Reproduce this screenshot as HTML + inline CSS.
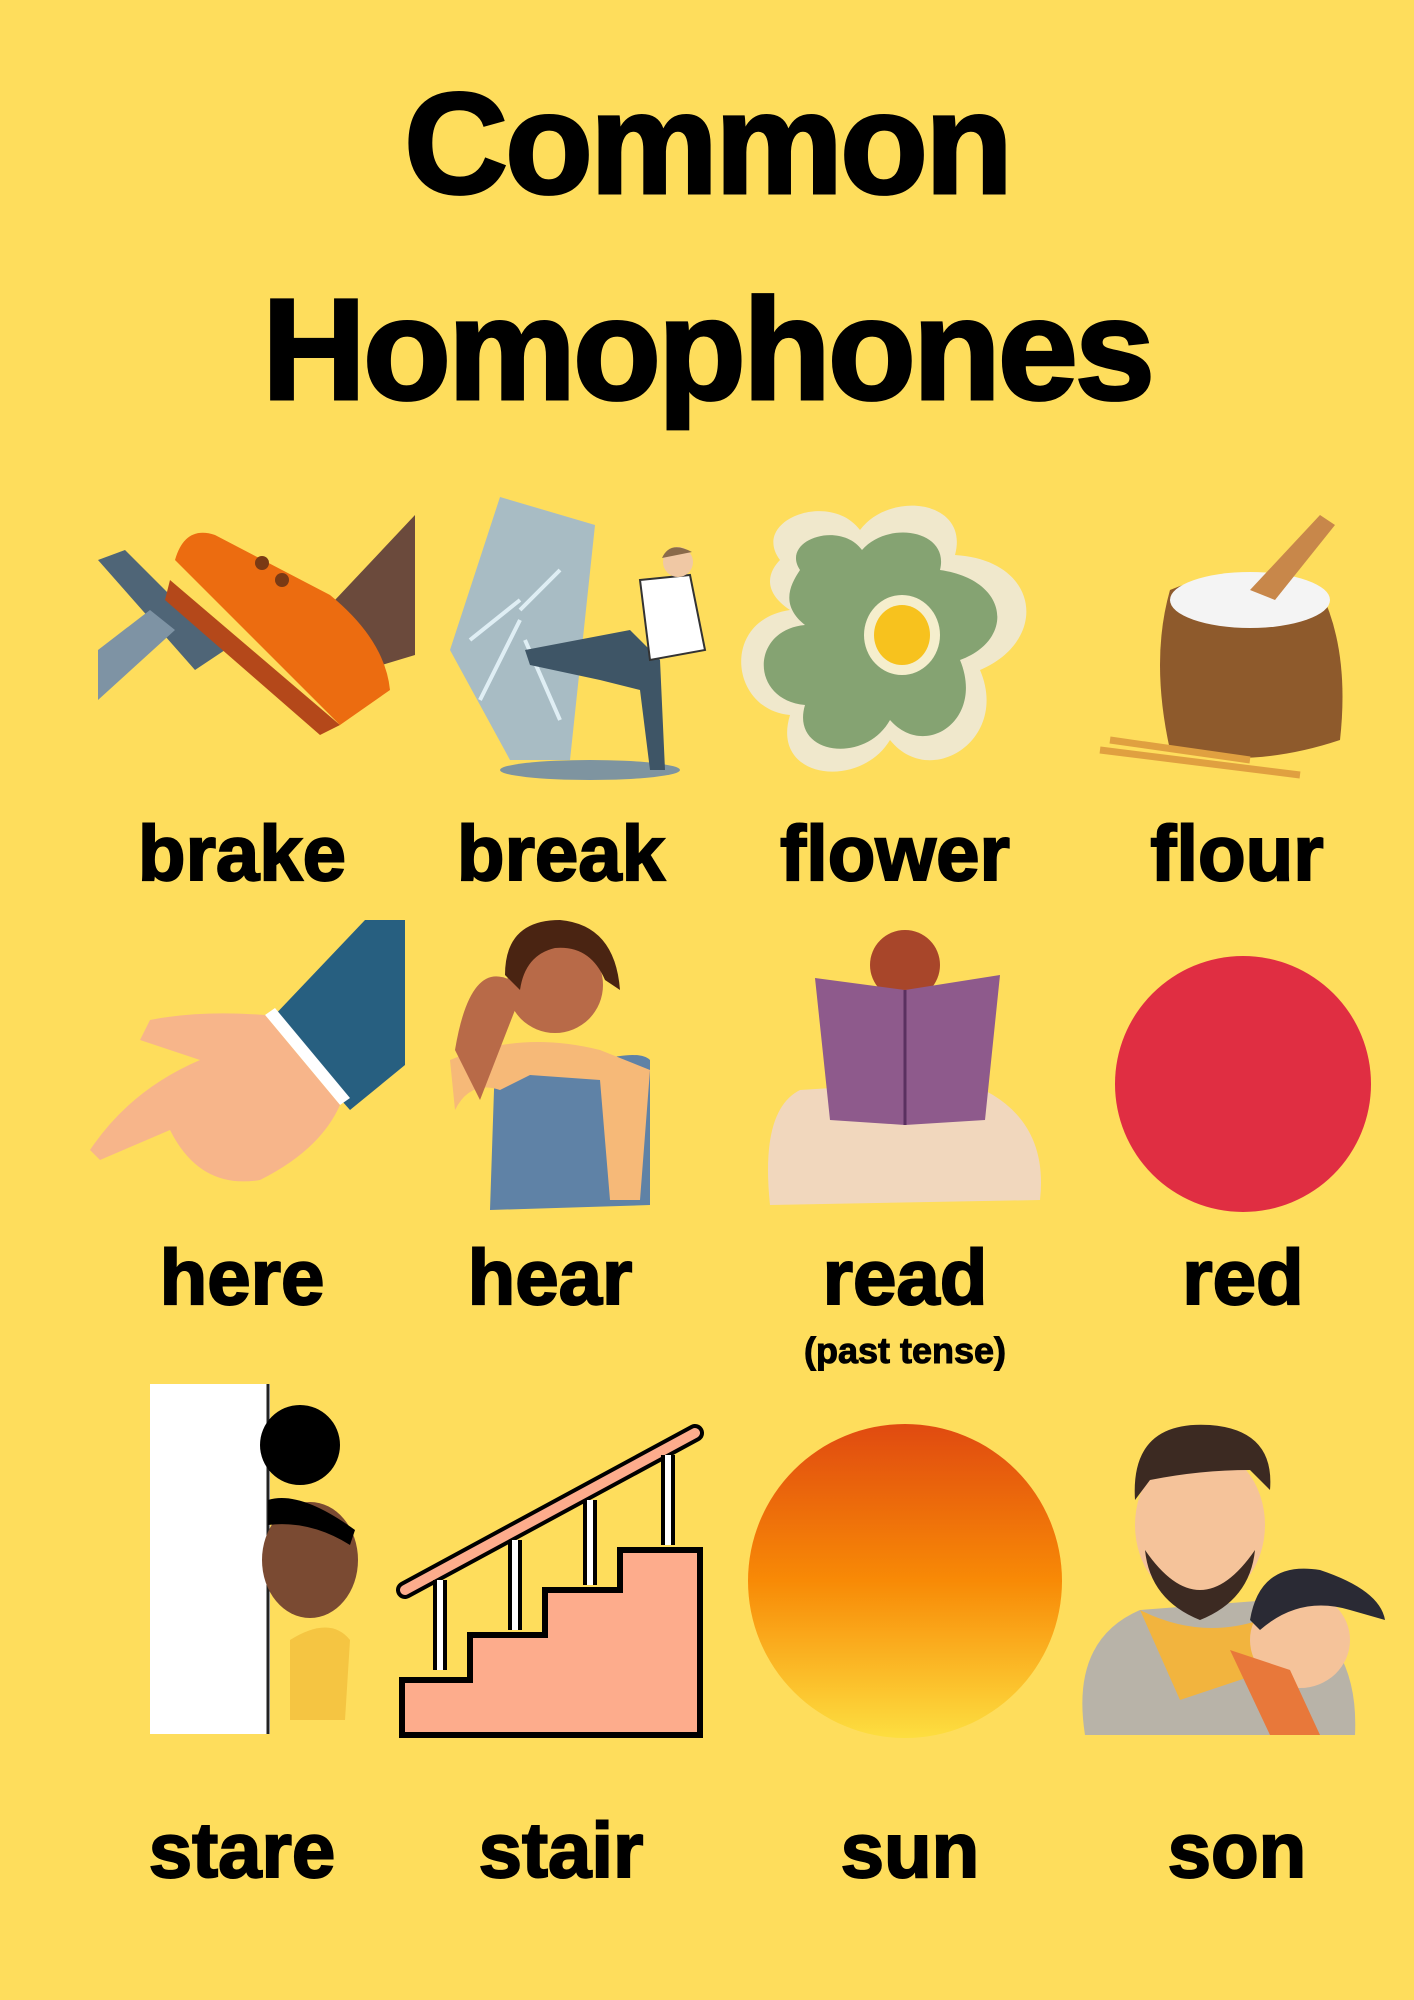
<!DOCTYPE html>
<html><head><meta charset="utf-8"><style>
html,body{margin:0;padding:0}
body{width:1414px;height:2000px;background:#FEDD5C;position:relative;overflow:hidden;font-family:"Liberation Sans",sans-serif;font-weight:bold;color:#000}
.t{position:absolute;left:0;width:1414px;text-align:center;font-size:144px;letter-spacing:-3px;line-height:1;-webkit-text-stroke:3px #000}
.l{position:absolute;width:400px;text-align:center;font-size:78px;letter-spacing:0px;line-height:1;-webkit-text-stroke:2px #000}
svg{position:absolute;left:0;top:0}
</style></head><body>
<div class="t" style="top:72px">Common</div>
<div class="t" style="top:278px">Homophones</div>

<svg width="1414" height="2000" viewBox="0 0 1414 2000">
<polygon points="98,560 125,550 225,650 195,670" fill="#4f6577"/>
<polygon points="98,650 98,700 175,630 150,610" fill="#7e93a4"/>
<polygon points="415,515 415,655 365,670 335,600" fill="#6b4a3c"/>
<path d="M175,560 Q185,525 215,535 L330,595 Q385,640 390,690 L340,725 Z" fill="#ec6c10"/>
<path d="M170,580 L340,725 L320,735 L165,600 Z" fill="#b4481a"/>
<circle cx="262" cy="563" r="7" fill="#7a3a14"/><circle cx="282" cy="580" r="7" fill="#7a3a14"/>
<polygon points="500,497 595,525 570,760 510,760 450,650" fill="#a8bcc4"/>
<path d="M520,600 L470,640 M520,620 L480,700 M525,640 L560,720 M520,610 L560,570" stroke="#dfeef4" stroke-width="4"/>
<ellipse cx="590" cy="770" rx="90" ry="10" fill="#7e94a0"/>
<path d="M525,650 L630,630 L660,660 L665,770 L650,770 L640,690 L600,680 L530,665 Z" fill="#3e5566"/>
<path d="M640,580 L690,575 L705,650 L650,660 Z" fill="#fff" stroke="#333" stroke-width="2"/>
<circle cx="678" cy="562" r="15" fill="#f0c8a4"/><path d="M662,558 Q670,540 692,552" fill="#8a6a4a"/>
<path d="M780,560 C750,520 830,490 860,530 C890,490 970,500 955,555 C1040,560 1050,640 980,670 C1010,740 930,790 890,740 C860,790 770,780 790,715 C730,710 720,620 790,610 C760,590 770,570 780,560 Z" fill="#f0e8cc"/>
<path d="M800,570 C780,540 840,520 862,550 C888,520 950,530 940,570 C1010,580 1015,640 960,660 C985,720 925,760 890,720 C865,765 790,755 805,705 C750,700 750,630 805,625 C780,605 790,585 800,570 Z" fill="#85a372"/>
<ellipse cx="902" cy="635" rx="38" ry="40" fill="#f5eecd"/><ellipse cx="902" cy="635" rx="28" ry="30" fill="#f7c21e"/>
<path d="M1170,590 Q1240,560 1320,590 Q1350,650 1340,740 Q1250,770 1170,750 Q1150,660 1170,590 Z" fill="#8e5a2c"/>
<ellipse cx="1250" cy="600" rx="80" ry="28" fill="#f4f4f4"/>
<path d="M1250,590 L1320,515 L1335,525 L1275,600 Z" fill="#c8874a"/>
<path d="M1100,750 L1300,775 M1110,740 L1250,760" stroke="#e0a040" stroke-width="7"/>
<polygon points="270,1020 350,1110 405,1065 405,920 365,920" fill="#275f80"/>
<polygon points="265,1015 340,1105 350,1098 275,1008" fill="#fff"/>
<path d="M265,1015 Q200,1010 150,1020 L140,1040 L200,1060 Q130,1090 90,1150 L100,1160 L170,1130 Q200,1190 260,1180 Q320,1150 340,1105 Z" fill="#f7b58a"/>
<path d="M490,1210 L495,1060 Q560,1040 600,1060 Q640,1050 650,1060 L650,1205 Z" fill="#5f82a6"/>
<path d="M450,1060 Q520,1030 600,1050 L650,1070 L640,1200 L610,1200 L600,1080 L530,1075 L500,1090 Q470,1080 455,1110 Z" fill="#f6b978"/>
<circle cx="555" cy="985" r="48" fill="#b86a48"/>
<path d="M505,975 Q505,920 560,920 Q615,925 620,990 L605,980 Q590,945 555,948 Q525,955 520,990 Z" fill="#4a2412"/>
<path d="M455,1050 Q470,960 510,980 L515,1010 L480,1100 Z" fill="#b86a48"/>
<path d="M770,1205 Q760,1110 800,1090 L960,1080 Q1050,1110 1040,1200 Z" fill="#f1d7bd"/>
<circle cx="905" cy="965" r="35" fill="#a8462a"/>
<polygon points="815,978 905,990 1000,975 985,1120 905,1125 830,1120" fill="#8e5a8c"/>
<line x1="905" y1="990" x2="905" y2="1125" stroke="#5a3060" stroke-width="3"/>
<circle cx="1243" cy="1084" r="128" fill="#e02e42"/>
<rect x="150" y="1384" width="120" height="350" fill="#fff"/><line x1="268" y1="1384" x2="268" y2="1734" stroke="#222" stroke-width="3"/>
<circle cx="300" cy="1445" r="40" fill="#000"/>
<ellipse cx="310" cy="1560" rx="48" ry="58" fill="#7a4a32"/>
<path d="M268,1500 Q300,1490 355,1530 L350,1545 Q310,1520 268,1525 Z" fill="#000"/>
<path d="M290,1640 Q330,1615 350,1640 L345,1720 L290,1720 Z" fill="#f5c542"/>
<g stroke="#000" stroke-width="6" fill="#fdac8c">
<polygon points="402,1735 402,1680 470,1680 470,1635 545,1635 545,1590 620,1590 620,1550 700,1550 700,1735"/>
</g>
<g stroke="#000" stroke-width="18" stroke-linecap="round"><line x1="405" y1="1590" x2="695" y2="1433"/></g>
<g stroke="#fdac8c" stroke-width="10" stroke-linecap="round"><line x1="405" y1="1590" x2="695" y2="1433"/></g>
<g stroke="#000" stroke-width="14"><line x1="440" y1="1580" x2="440" y2="1670"/><line x1="515" y1="1540" x2="515" y2="1630"/><line x1="590" y1="1500" x2="590" y2="1585"/><line x1="668" y1="1455" x2="668" y2="1545"/></g>
<g stroke="#fff" stroke-width="6"><line x1="440" y1="1580" x2="440" y2="1670"/><line x1="515" y1="1540" x2="515" y2="1630"/><line x1="590" y1="1500" x2="590" y2="1585"/><line x1="668" y1="1455" x2="668" y2="1545"/></g>
<defs><linearGradient id="sg" x1="0" y1="0" x2="0" y2="1"><stop offset="0" stop-color="#e04a10"/><stop offset="0.5" stop-color="#f88a06"/><stop offset="1" stop-color="#fdde40"/></linearGradient></defs>
<circle cx="905" cy="1581" r="157" fill="url(#sg)"/>
<path d="M1085,1735 Q1070,1640 1140,1610 L1270,1600 Q1360,1630 1355,1735 Z" fill="#b8b3a8"/>
<path d="M1140,1610 Q1200,1640 1260,1620 L1300,1660 L1180,1700 Z" fill="#f2b43e"/>
<ellipse cx="1200" cy="1525" rx="65" ry="78" fill="#f5c39a"/>
<path d="M1135,1500 Q1130,1420 1210,1425 Q1275,1430 1270,1490 L1250,1470 Q1200,1470 1150,1480 Z" fill="#3c2a22"/>
<path d="M1145,1550 Q1200,1630 1255,1550 Q1250,1600 1200,1620 Q1150,1600 1145,1550 Z" fill="#3c2a22"/>
<ellipse cx="1300" cy="1640" rx="50" ry="48" fill="#f5c39a"/>
<path d="M1250,1620 Q1260,1560 1320,1570 Q1380,1590 1385,1620 L1350,1610 Q1300,1595 1260,1630 Z" fill="#2a2a34"/>
<path d="M1230,1650 L1270,1735 L1320,1735 L1290,1670 Z" fill="#e8783a"/>
</svg>

<div class="l" style="left:42px;top:814px">brake</div>
<div class="l" style="left:361px;top:814px">break</div>
<div class="l" style="left:695px;top:814px">flower</div>
<div class="l" style="left:1037px;top:814px">flour</div>
<div class="l" style="left:42px;top:1238px">here</div>
<div class="l" style="left:350px;top:1238px">hear</div>
<div class="l" style="left:705px;top:1238px">read</div>
<div class="l" style="left:1043px;top:1238px">red</div>
<div class="l" style="left:705px;top:1333px;font-size:36px;-webkit-text-stroke:1px #000">(past tense)</div>
<div class="l" style="left:42px;top:1811px">stare</div>
<div class="l" style="left:361px;top:1811px">stair</div>
<div class="l" style="left:710px;top:1811px">sun</div>
<div class="l" style="left:1037px;top:1811px">son</div>
</body></html>
